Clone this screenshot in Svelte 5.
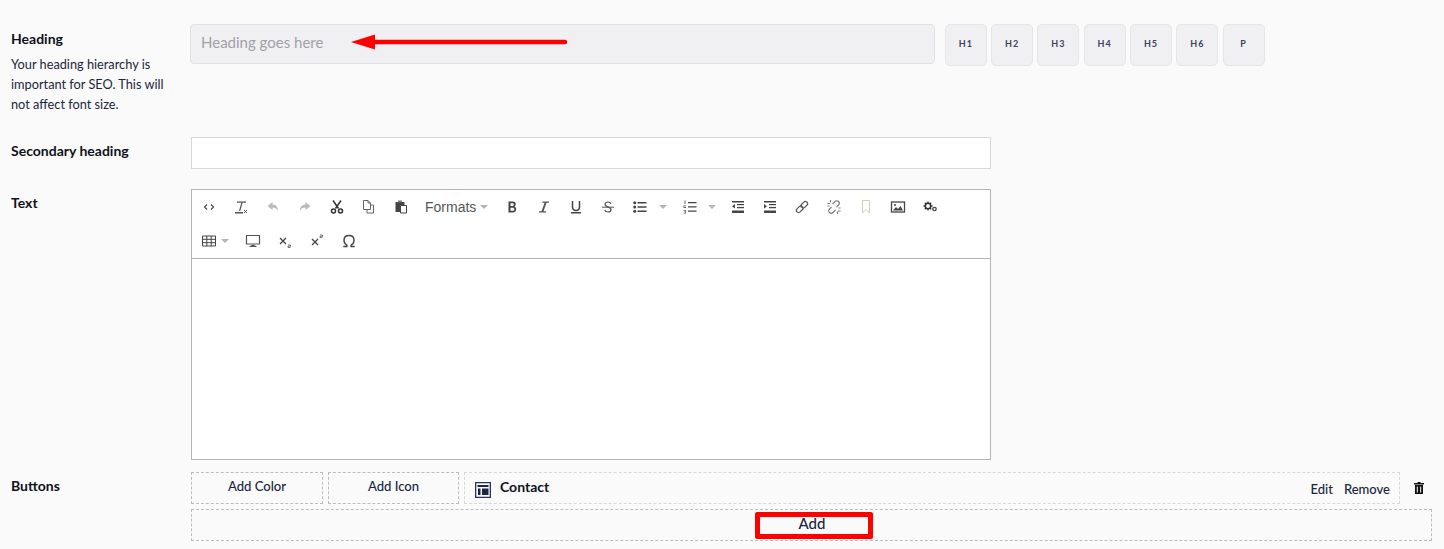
<script>
  const levels = ['H1', 'H2', 'H3', 'H4', 'H5', 'H6', 'P'];
  const row1 = [
    { k: 'code' }, { k: 'clear' }, { k: 'undo', off: true }, { k: 'redo', off: true }, { k: 'cut' }, { k: 'copy' }, { k: 'paste' },
    { k: 'formats' }, { k: 'bold' }, { k: 'italic' }, { k: 'underline' }, { k: 'strike' },
    { k: 'bullist', caret: true }, { k: 'numlist', caret: true }, { k: 'outdent' }, { k: 'indent' },
    { k: 'link' }, { k: 'unlink' }, { k: 'bookmark' }, { k: 'image' }, { k: 'gears' }
  ];
  const row2 = [{ k: 'table', caret: true }, { k: 'monitor' }, { k: 'sub' }, { k: 'sup' }, { k: 'omega' }];
</script>

{#snippet icon(k)}
  <svg class="ic" width="16" height="16" viewBox="0 0 16 16" aria-hidden="true">
    {#if k === 'code'}
      <path d="M6 5.500 3.500 8 6 10.500M10 5.500 12.500 8 10 10.500" fill="none" stroke="#444" stroke-width="1.100"/>
    {:else if k === 'clear'}
      <path d="M4 2.500h9v1.200H9.600L7.300 12H6L8.300 3.700H4zM2 13h8v1.400H2z" fill="#555"/><path d="m11 11 3 3m0-3-3 3" stroke="#555"/>
    {:else if k === 'undo'}
      <path d="M7.500 3 2.500 7l5 4V8.500c2.500 0 4.500 1 5.500 3.500 0-4-2-6.300-5.500-6.500z" fill="#bbb"/>
    {:else if k === 'redo'}
      <path d="m8.500 3 5 4-5 4V8.500C6 8.500 4 9.500 3 12c0-4 2-6.300 5.500-6.500z" fill="#bbb"/>
    {:else if k === 'cut'}
      <path d="M4 1.500 9.500 9.500M12 1.500 6.500 9.500" stroke="#333" stroke-width="1.500" fill="none"/><circle cx="4.500" cy="12" r="2" fill="none" stroke="#333" stroke-width="1.500"/><circle cx="11.500" cy="12" r="2" fill="none" stroke="#333" stroke-width="1.500"/>
    {:else if k === 'copy'}
      <path d="M2.500 1.500h4.500l2.500 2.500v6.500h-7zM7 1.500V4h2.500M9.500 6h3v8h-6.500v-3.500" fill="none" stroke="#666"/>
    {:else if k === 'paste'}
      <path d="M2.500 3h9v3.500H7V13H2.500z" fill="#444"/><path d="M5 1.500h4v2H5z" fill="#777"/><path d="M7.500 6.500h6v7.500h-6z" fill="#fff" stroke="#444"/>
    {:else if k === 'bold'}
      <path d="M4.500 2.500h4.200c2 0 3 1.100 3 2.700 0 1.200-.6 2-1.600 2.400 1.300.3 2.100 1.300 2.100 2.700 0 2-1.400 3.200-3.500 3.200H4.500zm2 1.800v2.700h2c.9 0 1.300-.6 1.300-1.400s-.5-1.300-1.300-1.300zm0 4.400v3h2.200c1 0 1.600-.5 1.600-1.500s-.6-1.500-1.600-1.500z" fill="#444"/>
    {:else if k === 'italic'}
      <path d="M6.500 2.500H13v1.300h-2.400L7.500 12.200H10v1.300H3v-1.300h2.500l3.100-8.400H6.500z" fill="#555"/>
    {:else if k === 'underline'}
      <path d="M4.500 2v6c0 2.200 1.300 3.400 3.500 3.400s3.500-1.200 3.500-3.400V2" fill="none" stroke="#444" stroke-width="1.500"/><path d="M3 13h10v1.500H3z" fill="#444"/>
    {:else if k === 'strike'}
      <path d="M11 5C10.500 3.700 9.500 3 8 3 6.200 3 5 3.900 5 5.300c0 3.200 6 2 6 5.400 0 1.400-1.300 2.300-3 2.300-1.700 0-2.900-.8-3.300-2.100" fill="none" stroke="#555" stroke-width="1.200"/><path d="M2 7.700h12v1H2z" fill="#555"/>
    {:else if k === 'bullist'}
      <path d="M5.500 3h9v1.500h-9zM5.500 7.300h9v1.500h-9zM5.500 11.500h9V13h-9z" fill="#444"/><circle cx="2.700" cy="3.700" r="1.500" fill="#444"/><circle cx="2.700" cy="8" r="1.500" fill="#444"/><circle cx="2.700" cy="12.300" r="1.500" fill="#444"/>
    {:else if k === 'numlist'}
      <path d="M6 3h8.500v1.300H6zM6 7.300h8.500v1.300H6zM6 11.500h8.500v1.300H6z" fill="#444"/><path d="M2.500 1.500h1v3.500h-1zM1.500 6.500h2.500v.8H2.300v.8H4v.8H1.500zM1.500 11h2.500v3.500H1.500v-.8h1.700v-.6H2v-.7h1.200v-.6H1.500z" fill="#666"/>
    {:else if k === 'outdent'}
      <path d="M2 2h12v1.500H2zM7 5h7v1.300H7zM7 8h7v1.300H7zM2 11.500h12V14H2z" fill="#444"/><path d="M5 5v4.500L2 7.200z" fill="#444"/>
    {:else if k === 'indent'}
      <path d="M2 2h12v1.500H2zM7 5h7v1.300H7zM7 8h7v1.300H7zM2 11.500h12V14H2z" fill="#444"/><path d="M2 5v4.500l3-2.300z" fill="#444"/>
    {:else if k === 'link'}
      <g fill="none" stroke="#555" stroke-width="1.200" transform="rotate(-45 8 8)"><rect x="1" y="5.800" width="7.500" height="4.400" rx="2.200"/><rect x="7.500" y="5.800" width="7.500" height="4.400" rx="2.200"/></g>
    {:else if k === 'unlink'}
      <path d="M6.500 5 9 2.500c1-1 2.500-1 3.500 0s1 2.500 0 3.500L10.500 8M9.500 11 7 13.500c-1 1-2.500 1-3.500 0s-1-2.500 0-3.500L5.500 8M1.500 4.500H4M4.500 1v2.500M12 12h2.500M11.500 15v-2.500M1.500 7h2M12.500 9h2" fill="none" stroke="#777" stroke-width="1.100"/>
    {:else if k === 'bookmark'}
      <path d="M4.500 1.500h7v12.500L8 10.500 4.500 14z" fill="none" stroke="#d8cdb8"/>
    {:else if k === 'image'}
      <rect x="1.500" y="3" width="13" height="10" fill="none" stroke="#444" stroke-width="1.300"/><path d="m3 11.500 3-3.500 2 2 2.500-3 2.500 4.500z" fill="#444"/><circle cx="5" cy="6" r="1" fill="#444"/>
    {:else if k === 'gears'}
      <path d="M6 2.500v9M1.500 7h9M2.800 3.800l6.400 6.400M9.200 3.800l-6.400 6.400" stroke="#333" stroke-width="1.300"/><circle cx="6" cy="7" r="2.700" fill="#fff" stroke="#333" stroke-width="1.500"/><circle cx="12.500" cy="10" r="1.700" fill="none" stroke="#444" stroke-width="1.300"/>
    {:else if k === 'table'}
      <path d="M1.500 3h13v10h-13zM1.500 6.300h13M1.500 9.700h13M5.800 3v10M10.200 3v10" fill="none" stroke="#444"/>
    {:else if k === 'monitor'}
      <path d="M1.500 2.500h13V11h-13z" fill="none" stroke="#555" stroke-width="1.200"/><path d="M5 13h6l-3-1.500zM4.500 13h7v1h-7z" fill="#555"/>
    {:else if k === 'sub'}
      <path d="m3 5 6 6m0-6-6 6" stroke="#444" stroke-width="1.300"/><path d="M11 12h2.500v1.200H11v1.300h2.500" fill="none" stroke="#444" stroke-width=".7"/>
    {:else if k === 'sup'}
      <path d="m3 6 6 6m0-6-6 6" stroke="#444" stroke-width="1.300"/><path d="M11 2h2.500v1.300H11v1.300h2.500" fill="none" stroke="#444" stroke-width=".7"/>
    {:else if k === 'omega'}
      <path d="M2.300 13.500h3.600v-1.400C4 11 3 9.300 3 7.200 3 4.300 5 2.500 8 2.500s5 1.800 5 4.700c0 2.100-1 3.800-2.900 4.900v1.400h3.600" fill="none" stroke="#444" stroke-width="1.400"/>
    {/if}
  </svg>
{/snippet}

{#snippet tool(b)}
  {#if b.k === 'formats'}
    <span class="formats">Formats<i class="caret"></i></span>
  {:else}
    <span class="tool {b.k}" class:wide={b.caret}>
      {@render icon(b.k)}
      {#if b.caret}<i class="caret"></i>{/if}
    </span>
  {/if}
{/snippet}

<main class="page">
  <section class="row heading-row">
    <div class="label">
      <strong>Heading</strong>
      <p>Your heading hierarchy is important for SEO. This will not affect font size.</p>
    </div>
    <div class="heading-fields">
      <div class="heading-input">
        <span>Heading goes here</span>
        <svg class="arrow" width="220" height="16" viewBox="0 0 220 16" aria-hidden="true">
          <path d="M0 8 24 0.500V5.800H214a2.200 2.200 0 0 1 0 4.400H24V15.500z" fill="#f00"/>
        </svg>
      </div>
      <div class="levels">
        {#each levels as l}<button>{l}</button>{/each}
      </div>
    </div>
  </section>

  <section class="row secondary-row">
    <div class="label"><strong>Secondary heading</strong></div>
    <div class="text-input"></div>
  </section>

  <section class="row text-row">
    <div class="label"><strong>Text</strong></div>
    <div class="editor">
      <div class="toolbar">
        <div class="tools">{#each row1 as b}{@render tool(b)}{/each}</div>
        <div class="tools">{#each row2 as b}{@render tool(b)}{/each}</div>
      </div>
      <div class="editor-body"></div>
    </div>
  </section>

  <section class="row buttons-row">
    <div class="label"><strong>Buttons</strong></div>
    <div class="buttons-col">
      <div class="buttons-top">
        <div class="dash add-color">Add Color</div>
        <div class="dash add-icon">Add Icon</div>
        <div class="dash-light contact">
          <svg width="16" height="16" viewBox="0 0 16 16" aria-hidden="true">
            <path d="M0 0h16v16H0zM1.300 1.300v13.400h13.400V1.300z" fill="#2b3358" fill-rule="evenodd"/>
            <path d="M2.500 3h11v2h-11zM3 6.500h2.500V13H3zM7 6.500h6.500V13H7z" fill="#1d2748"/>
          </svg>
          <b>Contact</b>
          <span class="actions"><span>Edit</span><span>Remove</span></span>
        </div>
        <svg class="trash" width="10" height="12" viewBox="0 0 10 12" aria-hidden="true">
          <path d="M3.500 0h3v1H10v1.500H0V1h3.500zM1 3h8v9H1zm1.800 1.500v6h1v-6zm3.400 0v6h1v-6z" fill="#111" fill-rule="evenodd"/>
        </svg>
      </div>
      <div class="dash add-row"><span class="add">Add</span></div>
    </div>
  </section>
</main>

<style>
  :global(body) {
    margin: 0;
    background: #fafafa;
  }
  .page {
    height: 549px;
    overflow: hidden;
    box-sizing: border-box;
    padding: 24px 12px 0 11px;
    font-family: Lato, sans-serif;
    color: #1b2440;
    background: #fafafa;
  }
  .row {
    display: grid;
    grid-template-columns: 180px 1fr;
  }
  .heading-row { height: 113px; }
  .secondary-row { height: 52px; }
  .text-row { height: 283px; }
  .label { color: #0e1220; font-size: 14px; }
  .label strong { font-weight: 700; display: block; line-height: 20px; }
  .heading-row .label { padding-top: 5px; }
  .secondary-row .label { padding-top: 4px; }
  .text-row .label { padding-top: 4px; }
  .buttons-row .label { padding-top: 4px; }
  .label p {
    margin: 5px 0 0;
    width: 160px;
    font-size: 12.75px;
    line-height: 20px;
    color: #20263a;
  }
  .heading-fields {
    display: flex;
    align-items: flex-start;
    margin-left: -1px;
  }
  .heading-input {
    position: relative;
    box-sizing: border-box;
    width: 745px;
    height: 40px;
    padding: 0 0 5px 10px;
    display: flex;
    align-items: center;
    background: #f0f0f2;
    border: 1px solid #e2e2e4;
    border-radius: 4px;
    font-size: 15px;
    color: #a1a1a8;
  }
  .arrow {
    position: absolute;
    left: 160px;
    top: 9px;
  }
  .levels {
    display: flex;
    gap: 4.3px;
    margin-left: 9.8px;
  }
  .levels button {
    width: 42px;
    height: 42px;
    padding: 0 0 3px 0;
    background: #f0f0f2;
    border: 1px solid #e6e6e8;
    border-radius: 5px;
    font: 700 9px Lato, sans-serif;
    letter-spacing: 1px;
    color: #3b4260;
  }
  .text-input {
    box-sizing: border-box;
    width: 800px;
    height: 32px;
    background: #fff;
    border: 1px solid #d8d8d8;
  }
  .editor {
    box-sizing: border-box;
    width: 800px;
    height: 271px;
    background: #fff;
    border: 1px solid #b5b5b5;
    display: flex;
    flex-direction: column;
  }
  .toolbar {
    box-sizing: border-box;
    height: 69px;
    flex: none;
    border-bottom: 1px solid #b5b5b5;
  }
  .tools {
    display: flex;
    align-items: center;
    height: 34px;
    padding-left: 1px;
  }
  .tool {
    flex: none;
    box-sizing: border-box;
    width: 32px;
    height: 34px;
    display: flex;
    align-items: center;
    justify-content: center;
  }
  .tool.wide {
    justify-content: flex-start;
    padding-left: 8px;
  }
  .tool.bullist { width: 50px; gap: 11px; }
  .tool.numlist { width: 48px; gap: 10px; }
  .tool.table { width: 44px; gap: 4px; }
  .caret {
    display: inline-block;
    width: 0;
    height: 0;
    border-left: 4.500px solid transparent;
    border-right: 4.500px solid transparent;
    border-top: 4.500px solid #b5b5b5;
  }
  .formats {
    flex: none;
    box-sizing: border-box;
    width: 79px;
    padding-left: 8px;
    display: flex;
    align-items: center;
    gap: 4px;
    font: 14px "Liberation Sans", Arial, sans-serif;
    color: #555;
  }
  .editor-body { flex: 1; }
  .buttons-col {
    display: flex;
    flex-direction: column;
    gap: 5px;
  }
  .buttons-top {
    display: flex;
    align-items: flex-start;
    gap: 5px;
  }
  .dash, .dash-light {
    box-sizing: border-box;
    height: 32px;
    display: flex;
    align-items: center;
    justify-content: center;
    font-size: 13.1px;
    font-weight: 500;
  }
  .dash { border: 1px dashed #bdbdbd; }
  .dash-light { border: 1px dashed #d8d8d8; }
  .add-color { width: 132px; padding-bottom: 5px; }
  .add-icon { width: 131px; padding-bottom: 5px; }
  .contact {
    width: 936px;
    justify-content: flex-start;
    padding-left: 10px;
    color: #0e1220;
  }
  .contact svg { margin-top: 4px; flex: none; }
  .contact b { margin-left: 9px; padding-bottom: 3px; font-size: 14px; font-weight: 700; }
  .actions {
    margin-left: auto;
    padding: 1px 9px 0 0;
    display: flex;
    gap: 11px;
    font-size: 13px;
    color: #1b2440;
  }
  .trash {
    margin: 10px 0 0 9px;
    flex: none;
  }
  .add-row {
    width: 1241px;
  }
  .add {
    box-sizing: border-box;
    width: 118px;
    height: 27px;
    margin-left: 4px;
    padding: 0 3px 5px 0;
    display: flex;
    align-items: center;
    justify-content: center;
    border: 5px solid #f00;
    border-radius: 2px;
    font-size: 15px;
    font-weight: 500;
  }
</style>
